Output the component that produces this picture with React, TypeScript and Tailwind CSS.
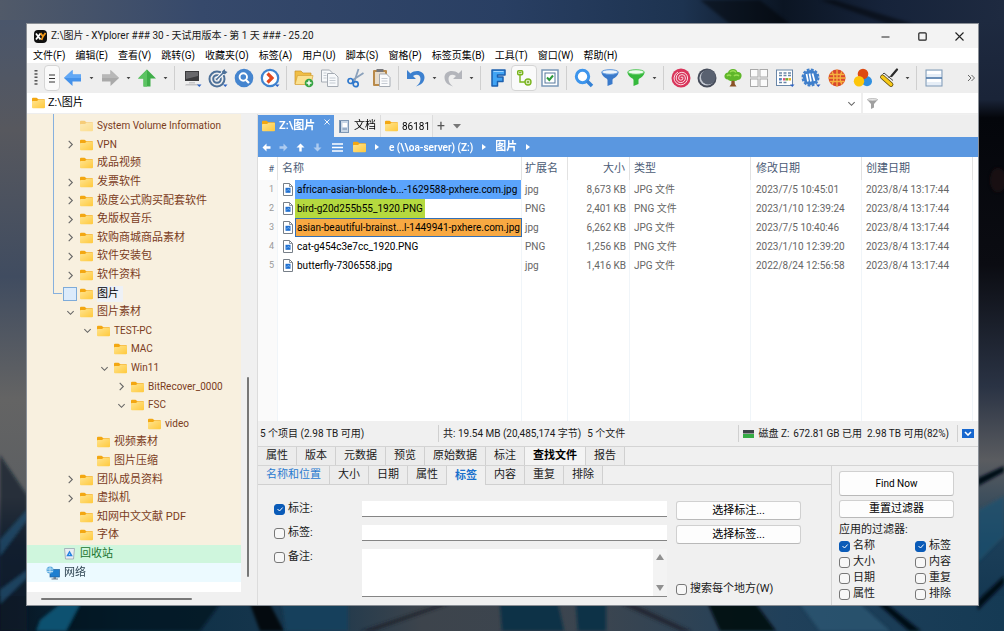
import React, { useState } from 'react';

/* ---------- shared drawings ---------- */

function Folder({ faded = false, className = 'h-3 w-[13px]' }: { faded?: boolean; className?: string }) {
  return (
    <svg viewBox="0 0 26 23" className={`${className} shrink-0 ${faded ? 'opacity-50' : ''}`} aria-hidden="true">
      <defs>
        <linearGradient id="folderFront" x1="0" y1="0" x2="1" y2="1">
          <stop offset="0" stopColor="#ffe490" />
          <stop offset="1" stopColor="#ffc93c" />
        </linearGradient>
      </defs>
      <path d="M0 3a2 2 0 0 1 2-2h7l4 3h11a2 2 0 0 1 2 2v13H0z" fill="#f3a712" />
      <path d="M0 9a1.500 1.500 0 0 1 1.500-1.500H10L13 5h11.500A1.500 1.500 0 0 1 26 6.500V20a2 2 0 0 1-2 2H2a2 2 0 0 1-2-2z" fill="url(#folderFront)" />
    </svg>
  );
}

function Chevron({ open }: { open: boolean }) {
  return (
    <svg viewBox="0 0 10 10" className="h-[9px] w-[9px]" fill="none" stroke="#666" strokeWidth="1.200" aria-hidden="true">
      <path d={open ? 'M1.500 3.500 5 7l3.500-3.500' : 'M3 1l4 4-4 4'} />
    </svg>
  );
}

function Backdrop() {
  return (
    <svg viewBox="0 0 1004 631" preserveAspectRatio="none" className="absolute inset-0 h-full w-full" aria-hidden="true">
      <defs>
        <linearGradient id="skyTop" x1="0" y1="0" x2="1" y2="0">
          <stop offset="0" stopColor="#515a69" />
          <stop offset="0.2" stopColor="#36496b" />
          <stop offset="0.5" stopColor="#293f63" />
          <stop offset="0.68" stopColor="#1d3350" />
          <stop offset="0.78" stopColor="#0b1523" />
          <stop offset="0.88" stopColor="#16233a" />
          <stop offset="1" stopColor="#1e2a40" />
        </linearGradient>
        <linearGradient id="skyLeft" x1="0" y1="0" x2="0" y2="1">
          <stop offset="0" stopColor="#4a566b" />
          <stop offset="0.18" stopColor="#57585e" />
          <stop offset="0.42" stopColor="#404c60" />
          <stop offset="0.62" stopColor="#646464" />
          <stop offset="0.78" stopColor="#5c5f62" />
          <stop offset="0.86" stopColor="#12263c" />
          <stop offset="1" stopColor="#071a2c" />
        </linearGradient>
        <linearGradient id="wallRight" x1="0" y1="0" x2="0" y2="1">
          <stop offset="0" stopColor="#1e2a40" />
          <stop offset="0.13" stopColor="#1a2438" />
          <stop offset="0.16" stopColor="#04060b" />
          <stop offset="0.4" stopColor="#0b0c12" />
          <stop offset="0.6" stopColor="#2a3344" />
          <stop offset="0.72" stopColor="#5a5c60" />
          <stop offset="0.86" stopColor="#1b3e58" />
          <stop offset="1" stopColor="#10344e" />
        </linearGradient>
        <linearGradient id="glassBottom" x1="0" y1="0" x2="1" y2="0">
          <stop offset="0" stopColor="#06131f" />
          <stop offset="0.12" stopColor="#0c2f45" />
          <stop offset="0.3" stopColor="#17364d" />
          <stop offset="0.42" stopColor="#3d444c" />
          <stop offset="0.6" stopColor="#3b4550" />
          <stop offset="0.78" stopColor="#20405a" />
          <stop offset="1" stopColor="#153a54" />
        </linearGradient>
        <filter id="focus"><feGaussianBlur stdDeviation="1.500" /></filter>
      </defs>
      <rect width="1004" height="40" fill="url(#skyTop)" />
      <rect y="20" width="60" height="611" fill="url(#skyLeft)" />
      <rect x="940" y="20" width="64" height="611" fill="url(#wallRight)" />
      <rect y="596" width="1004" height="35" fill="url(#glassBottom)" />
      <g filter="url(#focus)">
        <path d="M700 0h60l30 24h-60zM820 0h14l80 24h-26z" fill="#000" opacity="0.45" />
        <path d="M0 455 27 495V631H0z" fill="#0a1a2b" opacity="0.7" />
        <path d="M0 540l27-30v10L0 556zM0 590l27-20v8L0 604z" fill="#245273" opacity="0.7" />
        <path d="M70 604h150l-20 27H50z" fill="#04101a" opacity="0.7" />
        <path d="M40 620 60 604h20l-14 27H36z" fill="#0f5170" />
        <path d="M250 604h20l14 27h-24z" fill="#000" opacity="0.8" />
        <path d="M282 604h66v27h-62z" fill="#12405c" />
        <path d="M500 604h58l6 27h-62zM576 604h30v27h-28z" fill="#0d3047" />
        <path d="M708 604h48l20 27h-56z" fill="#02080e" opacity="0.9" />
        <path d="M360 631l80-27h10l-76 27zM620 604l60 27h12l-58-27z" fill="#1a2027" opacity="0.7" />
        <path d="M800 604h60l30 27h-70z" fill="#2b5672" opacity="0.8" />
        <path d="M878 604h9l34 27h-12zM978 478l26-12v6l-26 14zM978 600l26-24v8l-26 26z" fill="#050d16" />
        <path d="M978 510l26-14v40l-26 26z" fill="#1a5270" opacity="0.7" />
        <ellipse cx="998" cy="180" rx="8" ry="12" fill="#2c1c16" opacity="0.5" />
      </g>
    </svg>
  );
}

/* ---------- tool bar ---------- */

const Svg = ({ children }: { children: React.ReactNode }) => (
  <svg viewBox="0 0 20 20" className="h-5 w-5" fill="none" aria-hidden="true">
    {children}
  </svg>
);

const Dot = () => <path d="M15 16.500h4.500l-2.200 2.500z" fill="#2b62c4" />;

const icons = {
  back: <Svg><path d="M1 10 9.500 2v4.500L18 6.500v7l-8.500 0V18z" fill="#4592ea" /><path d="M1 10 9.500 2v4.500L18 6.500V10z" fill="#62a8f5" /></Svg>,
  forward: <Svg><path d="M19 10 10.500 2v4.500L2 6.500v7l8.500 0V18z" fill="#a9a9a9" /><path d="M19 10 10.500 2v4.500L2 6.500V10z" fill="#b8b8b8" /></Svg>,
  up: <Svg><path d="M10 1.500 19 10.500h-5.500V18.500h-7V10.500H1z" fill="#3fae49" /><path d="M10 1.500 1 10.500h5.500v8H10z" fill="#5cc463" /></Svg>,
  computer: (
    <Svg>
      <rect x="3" y="3" width="14" height="10" fill="#3b3b3d" />
      <path d="M4 4h12v4L4 11z" fill="#68686b" />
      <path d="M7 14h6v1.500H7zM4 16h12l1 1.500H3z" fill="#c4c4c6" />
      <Dot />
    </Svg>
  ),
  target: (
    <Svg>
      <g stroke="#4d7199" strokeWidth="2"><circle cx="9" cy="11" r="7.500" /><circle cx="9" cy="11" r="3.800" /></g>
      <circle cx="9" cy="11" r="1.300" fill="#4d7199" />
      <path d="M9 11 16 4" stroke="#fff" strokeWidth="3.500" /><path d="M9 11 16 4" stroke="#4d7199" strokeWidth="1.600" />
      <path d="M14 3.500 16.500 1l.8 2L19.500 4 17 6.200l-2.600-.4z" fill="#4d7199" />
      <Dot />
    </Svg>
  ),
  searchDisc: (
    <Svg>
      <circle cx="10" cy="10" r="9.300" fill="#4585cf" />
      <circle cx="9.300" cy="9" r="3.700" stroke="#fff" strokeWidth="1.900" /><path d="m12 12 3 3" stroke="#fff" strokeWidth="2.200" />
    </Svg>
  ),
  goDisc: (
    <Svg>
      <circle cx="10" cy="10" r="8.200" fill="#fff" stroke="#3f83cf" strokeWidth="2.200" />
      <path d="m7.500 5.500 4.500 4.500-4.500 4.500" stroke="#e2481e" strokeWidth="3.200" /><Dot />
    </Svg>
  ),
  newFolder: (
    <Svg>
      <path d="M1 3h6l2 2h8v11H1z" fill="#f0be45" stroke="#c99325" strokeWidth=".7" />
      <path d="M3.500 7.500H19l-2 9H1z" fill="#fbe191" stroke="#d5a23a" strokeWidth=".7" />
      <circle cx="15" cy="15" r="4.300" fill="#39a545" /><path d="M15 12.500v5M12.500 15h5" stroke="#fff" strokeWidth="1.500" />
    </Svg>
  ),
  copy: (
    <Svg>
      <path d="M1.500 2h8l2.500 2.500V14H1.500z" fill="#f7f9fb" stroke="#a5abb3" />
      <path d="M7.500 5.500h7l3.500 3.500v9.500H7.500z" fill="#f7f9fb" stroke="#a5abb3" />
      <path d="M9.500 10h6M9.500 12.500h6M9.500 15h6M3.500 5h3M3.500 7.500h3M3.500 10h3" stroke="#b9c0c9" strokeWidth=".8" />
    </Svg>
  ),
  cut: (
    <Svg>
      <path d="M12.500 1 8.500 13M17.500 5 6 12.500" stroke="#8ba1bb" strokeWidth="1.800" />
      <circle cx="4.500" cy="13" r="2.500" stroke="#2f78cc" strokeWidth="1.700" /><circle cx="9.700" cy="16.200" r="2.500" stroke="#2f78cc" strokeWidth="1.700" />
    </Svg>
  ),
  paste: (
    <Svg>
      <rect x="1" y="2" width="14" height="16" rx="1" fill="#b98a4a" /><rect x="3" y="4" width="10" height="12" fill="#e7dccb" />
      <rect x="4.500" y="1" width="7" height="3" fill="#77777a" />
      <path d="M7.500 6h7l3.500 3.500V18.500H7.500z" fill="#fafbfc" stroke="#a5abb3" />
      <path d="M9.500 10.500h6M9.500 13h6M9.500 15.500h6" stroke="#b9c0c9" strokeWidth=".8" />
    </Svg>
  ),
  undo: <Svg><path d="M1 2v9h9L7 8c4-2.500 7.500-1 7.500 3 0 3-1.500 5-4.500 7.500 5-1.500 8.500-4.500 8.500-9C18.500 3 10 1 4.500 5.500z" fill="#3c80cf" /></Svg>,
  redo: <Svg><path d="M19 2v9h-9l3-3C9 5.500 5.500 7 5.500 11c0 3 1.500 5 4.500 7.500-5-1.500-8.500-4.500-8.500-9C1.500 3 10 1 15.500 5.500z" fill="#b3b5bb" /></Svg>,
  font: (
    <Svg><path d="M4 2h13v5H9.500v2H15v4.500H9.500V18H4z" fill="#41a4f4" stroke="#1b5fae" strokeWidth="1.500" strokeLinejoin="round" /><path d="M5.500 3.500h10" stroke="#9bd2ff" /></Svg>
  ),
  tree: (
    <Svg>
      <g stroke="#7ab51d" strokeWidth="1.400"><rect x="3.700" y="2.700" width="5" height="4" rx="1" fill="#e8f6cf" /><path d="M6 7v7h5" /><circle cx="14" cy="14" r="3" fill="#e8f6cf" /></g>
      <path d="M5 4.700h2.500M12.700 14h2.600M14 12.700v2.600" stroke="#5d9210" strokeWidth=".9" />
    </Svg>
  ),
  check: (
    <Svg>
      <rect x="2" y="2" width="16" height="16" fill="#fff" stroke="#7a98b8" strokeWidth="1.500" /><rect x="5" y="5" width="10" height="10" stroke="#56789c" />
      <path d="m7 9.500 2.300 2.500L13 7.500" stroke="#2d9a3a" strokeWidth="2" />
    </Svg>
  ),
  search: <Svg><circle cx="8.500" cy="8.500" r="6.200" fill="#fdfeff" stroke="#3d95ec" strokeWidth="3" /><path d="m13 13 5 5" stroke="#3582d6" strokeWidth="3.600" /></Svg>,
  filterBlue: <Svg><path d="M1.500 4C1.500 9 7.500 10 7.500 12v6l5-2v-4c0-2 6-3 6-8z" fill="#3a7acb" /><ellipse cx="10" cy="4" rx="8.200" ry="2.300" fill="#eef5fc" stroke="#5a95db" /></Svg>,
  filterGreen: <Svg><path d="M1.500 4C1.500 9 7.500 10 7.500 12v6l5-2v-4c0-2 6-3 6-8z" fill="#35b93c" /><ellipse cx="10" cy="4" rx="8.200" ry="2.300" fill="#eefcef" stroke="#58c95e" /></Svg>,
  spiral: (
    <Svg>
      <circle cx="10" cy="10" r="9.500" fill="#d9355b" />
      <path d="M10 10a1 1 0 0 1 2 0 2.200 2.200 0 0 1-4.400 0 3.400 3.400 0 0 1 6.800 0 4.600 4.600 0 0 1-9.200 0 5.700 5.700 0 0 1 11.400 0 6.800 6.800 0 0 1-13.600 0 7.200 7.200 0 0 1 4-6" stroke="#fdeef1" strokeWidth=".9" />
    </Svg>
  ),
  moon: <Svg><circle cx="10" cy="10" r="9.500" fill="#454b59" /><circle cx="10" cy="10" r="7.600" fill="#c6cbd4" /><circle cx="11.300" cy="9" r="7.400" fill="#596170" /></Svg>,
  oak: (
    <Svg>
      <path d="M8.500 11h3l.3 5 1.700 2.500h-7L8.300 16z" fill="#8a5326" />
      <path d="M10 1c3 0 4 1.500 4.500 3C17.500 4 19 6 18.500 8.500c-.5 2.500-2 3.500-4 3.500-1 1.200-3 1.500-4.500.5-1.500 1-4 .5-5-1C2.500 11.500 1 9.500 1.500 7.500 2 5.500 3.500 4.500 5 4.500 5.500 2.500 7.500 1 10 1z" fill="#5fb62a" />
      <path d="M7 4c2-2 5-1.500 6 .5M4 8c1-1.500 3-1.500 4 0M11 8c1-1.500 4-1.500 5 0" stroke="#9ade55" strokeWidth="1.500" />
    </Svg>
  ),
  tiles: (
    <Svg><g fill="#fbfbfb" stroke="#a9a9a9"><rect x="1.500" y="1.500" width="7.500" height="7.500" /><rect x="11" y="1.500" width="7.500" height="7.500" /><rect x="1.500" y="11" width="7.500" height="7.500" /><rect x="11" y="11" width="7.500" height="7.500" /></g></Svg>
  ),
  calendar: (
    <Svg>
      <rect x="1.500" y="2" width="16" height="15.500" fill="#fff" stroke="#6a87a8" />
      <path d="M4 5h3M8.500 5h3M13 5h3M4 7.500h3M8.500 7.500h3M13 7.500h3" stroke="#6a87a8" strokeWidth="1.600" />
      <path d="M4 11h3M4 14.500h3M8.500 14.500h3" stroke="#6a87a8" strokeWidth="1.600" /><path d="M4 11.300h2.500" stroke="#4d82c7" strokeWidth="2.400" /><path d="M8 11.300h2.500" stroke="#e0507c" strokeWidth="2.400" /><path d="M10.500 11.300H13" stroke="#6aab2e" strokeWidth="2.400" /><path d="M13.500 11.300H16" stroke="#e8b022" strokeWidth="2.400" />
      <Dot />
    </Svg>
  ),
  badge: (
    <Svg>
      <circle cx="9.500" cy="9.500" r="7.600" fill="#3f7fcb" /><circle cx="9.500" cy="9.500" r="8" stroke="#3f7fcb" strokeWidth="2" strokeDasharray="2.800 1.400" />
      <path d="M5.500 6 7 13.500M8.500 5.500 10 13.500M11.500 5.500 13.500 13" stroke="#fff" strokeWidth="1.700" /><Dot />
    </Svg>
  ),
  ball: (
    <Svg>
      <circle cx="10" cy="10" r="8.500" fill="#d9482d" />
      <path d="M10 1.500v17M1.500 10h17M5 3.500c2.500 3.500 2.500 9.500 0 13M15 3.500c-2.500 3.500-2.500 9.500 0 13M2.500 6.500h15M2.500 13.500h15" stroke="#f6b23f" strokeWidth="1.300" />
    </Svg>
  ),
  circles: <Svg><circle cx="14" cy="13.200" r="5" fill="#2f8fe0" /><circle cx="10" cy="6" r="5.300" fill="#dd4b12" /><circle cx="6" cy="13.200" r="5.200" fill="#fdc60b" /></Svg>,
  roller: (
    <Svg>
      <path d="m12.500 8 5.500-6.500" stroke="#2b2b2b" strokeWidth="2.200" strokeLinecap="round" /><path d="M3.500 6.500 5 5l9 7.500M12.500 8l-3 1.500" stroke="#444" strokeWidth="1" />
      <path d="m3.500 9 8.500 7.500" stroke="#5d4a10" strokeWidth="4.800" strokeLinecap="round" /><path d="m3.500 9 8.500 7.500" stroke="#f7c918" strokeWidth="3.200" strokeLinecap="round" />
    </Svg>
  ),
  panes: (
    <Svg><rect x="2" y="2" width="16" height="16" fill="#e6eef7" stroke="#7e99b6" /><path d="M2 10h16" stroke="#4e78a8" strokeWidth="1.600" /><path d="M3 3h14v3H3zM3 11h14v3H3z" fill="#fff" /></Svg>
  ),
};

type IconName = keyof typeof icons;
const toolGroups: { name: IconName; label: string; caret?: boolean; boxed?: boolean }[][] = [
  [{ name: 'back', label: '后退', caret: true }, { name: 'forward', label: '前进', caret: true }, { name: 'up', label: '上一级', caret: true }],
  [{ name: 'computer', label: '此电脑' }, { name: 'target', label: '定位' }, { name: 'searchDisc', label: '查找' }, { name: 'goDisc', label: '转到' }],
  [{ name: 'newFolder', label: '新建文件夹' }, { name: 'copy', label: '复制' }, { name: 'cut', label: '剪切' }, { name: 'paste', label: '粘贴' }],
  [{ name: 'undo', label: '撤销', caret: true }, { name: 'redo', label: '重做', caret: true }],
  [{ name: 'font', label: '字体' }, { name: 'tree', label: '迷你树', boxed: true }, { name: 'check', label: '复选框' }],
  [{ name: 'search', label: '搜索' }, { name: 'filterBlue', label: '筛选' }, { name: 'filterGreen', label: '可视筛选', caret: true }],
  [
    { name: 'spiral', label: '螺旋' }, { name: 'moon', label: '深色模式' }, { name: 'oak', label: '树' }, { name: 'tiles', label: '平铺' },
    { name: 'calendar', label: '日历' }, { name: 'badge', label: '徽章' }, { name: 'ball', label: '球' }, { name: 'circles', label: '颜色' },
    { name: 'roller', label: '涂色', caret: true },
  ],
  [{ name: 'panes', label: '双窗格' }],
];

function Toolbar() {
  return (
    <div className="flex h-[30px] items-center overflow-hidden bg-[#eeeeee]">
      <svg viewBox="0 0 4 16" className="ml-[7px] h-4 w-1 shrink-0" aria-hidden="true">
        <path d="M2 0v16" stroke="#555" strokeWidth="3" strokeDasharray="1.500 1.800" />
      </svg>
      <button aria-label="菜单" className="ml-[6px] flex h-[26px] w-4 shrink-0 items-center justify-center rounded-sm border border-[#d5d5d5] bg-[#fafafa]">
        <svg viewBox="0 0 8 9" className="h-[9px] w-2" aria-hidden="true"><path d="M1 1h6M1 4.500h6M1 8h6" stroke="#333" /></svg>
      </button>
      {toolGroups.map((group, g) => (
        <div key={g} className="flex shrink-0 items-center">
          {g > 0 && <span className="mr-1 ml-[3px] h-6 w-px bg-[#cfcfcf]" />}
          {group.map((t) => (
            <React.Fragment key={t.name}>
              <button
                aria-label={t.label}
                className={`flex h-[26px] w-[26px] items-center justify-center rounded-sm border ${t.boxed ? 'border-[#d5d5d5] bg-[#fafafa]' : 'border-transparent'}`}
              >
                {icons[t.name]}
              </button>
              {t.caret && (
                <button aria-label={`${t.label}选项`} className="flex h-[26px] w-[11px] items-center justify-center">
                  <svg viewBox="0 0 6 4" className="h-[3px] w-[5px]" aria-hidden="true"><path d="M.5 0h5L3 3z" fill="#444" /></svg>
                </button>
              )}
            </React.Fragment>
          ))}
        </div>
      ))}
      <button aria-label="更多" className="mr-[3px] ml-auto">
        <svg viewBox="0 0 8 8" className="h-2 w-2" fill="none" stroke="#666" aria-hidden="true"><path d="m1 1 3 3-3 3M4.500 1l3 3-3 3" /></svg>
      </button>
    </div>
  );
}

/* ---------- folder tree ---------- */

type Node = {
  name: string;
  depth: number;
  toggle?: 'open' | 'closed' | 'box';
  guide?: boolean;
  faded?: boolean;
  kind?: 'bin' | 'network';
};

const nodes: Node[] = [
  { name: 'System Volume Information', depth: 0, guide: true, faded: true },
  { name: 'VPN', depth: 0, toggle: 'closed', guide: true },
  { name: '成品视频', depth: 0, guide: true },
  { name: '发票软件', depth: 0, toggle: 'closed', guide: true },
  { name: '极度公式购买配套软件', depth: 0, toggle: 'closed', guide: true },
  { name: '免版权音乐', depth: 0, toggle: 'closed', guide: true },
  { name: '软购商城商品素材', depth: 0, toggle: 'closed', guide: true },
  { name: '软件安装包', depth: 0, toggle: 'closed', guide: true },
  { name: '软件资料', depth: 0, toggle: 'closed', guide: true },
  { name: '图片', depth: 0, toggle: 'box' },
  { name: '图片素材', depth: 0, toggle: 'open' },
  { name: 'TEST-PC', depth: 1, toggle: 'open' },
  { name: 'MAC', depth: 2 },
  { name: 'Win11', depth: 2, toggle: 'open' },
  { name: 'BitRecover_0000', depth: 3, toggle: 'closed' },
  { name: 'FSC', depth: 3, toggle: 'open' },
  { name: 'video', depth: 4 },
  { name: '视频素材', depth: 1 },
  { name: '图片压缩', depth: 1 },
  { name: '团队成员资料', depth: 0, toggle: 'closed' },
  { name: '虚拟机', depth: 0, toggle: 'closed' },
  { name: '知网中文文献 PDF', depth: 0 },
  { name: '字体', depth: 0 },
  { name: '回收站', depth: -1, kind: 'bin' },
  { name: '网络', depth: -2, kind: 'network' },
];

const indent: Record<string, string> = {
  '-2': 'pl-px',
  '-1': 'pl-[18px]',
  '0': 'pl-[35px]',
  '1': 'pl-[52px]',
  '2': 'pl-[69px]',
  '3': 'pl-[86px]',
  '4': 'pl-[103px]',
};

const BinIcon = () => (
  <svg viewBox="0 0 13 13" className="h-[13px] w-[13px] shrink-0" aria-hidden="true">
    <path d="M1.500 1.500h10L10.500 12h-8z" fill="#e9edf2" stroke="#98a3b0" strokeWidth=".8" />
    <path d="M4.500 8.500 6.500 5l2 3.500z" fill="none" stroke="#2583e0" strokeWidth="1.500" />
  </svg>
);

const NetworkIcon = () => (
  <svg viewBox="0 0 14 14" className="h-[14px] w-[14px] shrink-0" aria-hidden="true">
    <rect x="4" y="3.500" width="9.500" height="7.500" fill="#1f7fd0" stroke="#1a5f9e" strokeWidth=".7" />
    <path d="M7.500 11h2.500v1.500h2V13.500H5.500v-1h2z" fill="#6e7f90" />
    <circle cx="4" cy="4" r="3.500" fill="#5aa9df" /><path d="M1 3h6M1 5.500h6M4 .5v7" stroke="#d8eefb" strokeWidth=".7" />
  </svg>
);

function TreeRow({ node }: { node: Node }) {
  const tone = node.kind === 'bin' ? 'bg-[#cff6dd] text-[#1c7430]' : node.kind === 'network' ? 'bg-[#ecfaff] text-[#2c4250]' : 'bg-[#f8f0df] text-[#7b3c1c]';
  const latin = /^[\x00-\x7f]+$/.test(node.name);
  const prefix = node.guide || node.toggle === 'box';
  return (
    <li className={`flex min-h-4 flex-1 items-center ${tone} ${prefix ? '' : indent[node.depth]}`}>
      {prefix && (
        <span className="ml-[26px] flex w-[9px] flex-col self-stretch">
          <span className={`flex-1 border-l border-[#86b0de] ${node.toggle === 'box' ? 'border-b' : ''}`} />
          <span className={`flex-1 ${node.guide ? 'border-l border-[#86b0de]' : ''}`} />
        </span>
      )}
      <span className="flex w-4 shrink-0 items-center justify-center">
        {node.toggle === 'box' && <button aria-label="展开" className="h-[14px] w-[14px] border border-[#7eabd9] bg-[#dcebfb]" />}
        {(node.toggle === 'open' || node.toggle === 'closed') && (
          <button aria-label={node.toggle === 'open' ? '折叠' : '展开'}>
            <Chevron open={node.toggle === 'open'} />
          </button>
        )}
      </span>
      <span className="ml-[2px] flex shrink-0 items-center gap-1">
        {node.kind === 'bin' ? <BinIcon /> : node.kind === 'network' ? <NetworkIcon /> : <Folder faded={node.faded} />}
        <span className={`whitespace-nowrap leading-4 ${latin ? 'text-[10px]' : 'text-[11px]'} ${node.toggle === 'box' ? 'bg-[#eef1f6] pr-1 text-black' : ''}`}>
          {node.name}
        </span>
      </span>
    </li>
  );
}

function TreePanel() {
  return (
    <aside className="flex w-[231px] shrink-0 flex-col border-r border-[#dcdcdc] bg-[#f0f0f0]">
      <div className="flex flex-1">
        <div className="flex w-[214px] flex-col bg-white">
          <div className="flex h-[3px] bg-[#f8f0df]"><span className="ml-[26px] border-l border-[#86b0de]" /></div>
          <ul className="flex flex-1 flex-col">
            {nodes.map((n) => <TreeRow key={n.name} node={n} />)}
          </ul>
          <div className="h-[10px]" />
        </div>
        <div className="flex flex-1 flex-col items-center pb-[15px]">
          <div className="flex-[262]" />
          <div className="mr-[2px] w-[2px] flex-[200] rounded bg-[#777]" />
        </div>
      </div>
      <div className="flex h-[13px] items-center pl-[14px]"><span className="h-[2px] w-[151px] rounded bg-[#777]" /></div>
    </aside>
  );
}

/* ---------- file list ---------- */

const files = [
  { name: 'african-asian-blonde-b...-1629588-pxhere.com.jpg', ext: 'jpg', size: '8,673 KB', type: 'JPG 文件', mod: '2023/7/5 10:45:01', mark: 'flex-1 bg-[#5ba4fc] border-[#5ba4fc]' },
  { name: 'bird-g20d255b55_1920.PNG', ext: 'PNG', size: '2,401 KB', type: 'PNG 文件', mod: '2023/1/10 12:39:24', mark: 'bg-[#b5d93f] border-[#b5d93f]' },
  { name: 'asian-beautiful-brainst...l-1449941-pxhere.com.jpg', ext: 'jpg', size: '6,262 KB', type: 'JPG 文件', mod: '2023/7/5 10:40:46', mark: 'flex-1 bg-[#f8a942] border-[#336fb5]' },
  { name: 'cat-g454c3e7cc_1920.PNG', ext: 'PNG', size: '1,256 KB', type: 'PNG 文件', mod: '2023/1/10 12:39:20', mark: 'border-transparent' },
  { name: 'butterfly-7306558.jpg', ext: 'jpg', size: '1,416 KB', type: 'JPG 文件', mod: '2022/8/24 12:56:58', mark: 'border-transparent' },
];

const FileIcon = () => (
  <svg viewBox="0 0 10 13" className="h-[13px] w-[10px] shrink-0" aria-hidden="true">
    <path d="M.5.5h6l3 3v9h-9z" fill="#fff" stroke="#777f88" /><path d="M6.500.5v3h3" fill="none" stroke="#777f88" strokeWidth=".8" />
    <rect x="2.500" y="4.800" width="5" height="5" fill="#1f6fd0" /><path d="m3 8.500 2-2 2 1" stroke="#8cc0f5" fill="none" strokeWidth=".8" />
  </svg>
);

const line = 'border-r border-[#f0f5f9]';

function FileTable() {
  return (
    <table className="h-full w-full table-fixed border-separate border-spacing-0 bg-white text-[10px] text-[#666]">
      <colgroup>
        <col className="w-[20px]" /><col className="w-[244px]" /><col className="w-[46px]" /><col className="w-[62px]" />
        <col className="w-[121px]" /><col className="w-[111px]" /><col className="w-[111px]" /><col />
      </colgroup>
      <thead>
        <tr className="h-[23px] text-left text-[11px] leading-4 text-[#4b5b75] [&>th]:border-r [&>th]:border-[#e2e2e2] [&>th]:font-normal">
          <th className="pr-[3px] text-right text-[9px]">#</th>
          <th className="pl-1">名称</th>
          <th className="pl-[3px]">扩展名</th>
          <th className="pr-1 text-right">大小</th>
          <th className="pl-1">类型</th>
          <th className="pl-[5px]">修改日期</th>
          <th className="pl-1">创建日期</th>
          <th className="!border-r-0" aria-label="空" />
        </tr>
      </thead>
      <tbody>
        {files.map((f, i) => (
          <tr key={f.name} className="h-[19px] whitespace-nowrap">
            <td className={`${line} bg-[#fafafa] pr-[3px] text-right text-[9px] text-[#999]`}>{i + 1}</td>
            <td className={`${line} pl-[5px]`}>
              <div className="flex items-center gap-[2px]">
                <FileIcon />
                <span className={`flex h-[19px] items-center border px-px text-black ${f.mark}`}>{f.name}</span>
              </div>
            </td>
            <td className={`${line} pl-[3px]`}>{f.ext}</td>
            <td className={`${line} pr-[3px] text-right`}>{f.size}</td>
            <td className={`${line} pl-1`}>{f.type}</td>
            <td className={`${line} pl-[5px]`}>{f.mod}</td>
            <td className={`${line} pl-1`}>2023/8/4 13:17:44</td>
            <td />
          </tr>
        ))}
        <tr>
          <td className={`${line} bg-[#fafafa]`} />
          {[0, 1, 2, 3, 4, 5].map((k) => <td key={k} className={line} />)}
          <td />
        </tr>
      </tbody>
    </table>
  );
}

const Arrow = ({ turn, dim = false }: { turn: string; dim?: boolean }) => (
  <svg viewBox="0 0 9 9" className={`h-[9px] w-[9px] ${turn} ${dim ? 'opacity-50' : ''}`} aria-hidden="true">
    <path d="M.5 4.500 4.500.5v2.800h4v2.400h-4v2.800z" fill="#fff" />
  </svg>
);

const Tri = () => <svg viewBox="0 0 4 6" className="h-[6px] w-1" aria-hidden="true"><path d="M0 0l4 3-4 3z" fill="#fff" /></svg>;

function PaneHeader() {
  return (
    <>
      <div className="flex h-[22px] items-stretch bg-[#eeeeee] text-[11px]">
        <div className="flex w-[76px] items-center bg-[#5a97e0] pl-1 text-white">
          <Folder />
          <span className="ml-1 text-[11px] leading-4 font-semibold">Z:\图片</span>
          <button aria-label="关闭标签页" className="mr-1 ml-auto self-start pt-1">
            <svg viewBox="0 0 6 6" className="h-[6px] w-[6px]" stroke="#fff" strokeWidth=".9" aria-hidden="true"><path d="m.5.5 5 5M5.500.5l-5 5" /></svg>
          </button>
        </div>
        <button className="flex w-[47px] items-center gap-[5px] border-r border-[#dcdcdc] bg-[#f2f2f2] pl-[5px] leading-4">
          <svg viewBox="0 0 10 13" className="h-[13px] w-[10px] shrink-0" aria-hidden="true">
            <rect x=".5" y=".5" width="9" height="12" fill="#c8d6e6" stroke="#7f98b5" /><path d="M1.500 1v11" stroke="#5b7ba0" />
            <rect x="3.500" y="3" width="4.500" height="4" fill="#fff" /><path d="M3.500 9h4.500" stroke="#6b87a8" />
          </svg>
          文档
        </button>
        <button className="flex w-[52px] items-center gap-1 border-r border-[#dcdcdc] bg-[#f2f2f2] pl-1 text-[10px]"><Folder /><span>86181</span></button>
        <button aria-label="新标签页" className="ml-1 text-sm leading-none text-[#555]">+</button>
        <button aria-label="标签页列表" className="ml-2">
          <svg viewBox="0 0 8 5" className="h-[5px] w-2" aria-hidden="true"><path d="M0 0h8L4 4.500z" fill="#777" /></svg>
        </button>
      </div>
      <div className="flex h-5 items-center bg-[#5a97e0] pl-1 text-[10px] font-semibold text-white">
        <div className="flex gap-2">
          <button aria-label="后退"><Arrow turn="" /></button>
          <button aria-label="前进"><Arrow turn="rotate-180" dim /></button>
          <button aria-label="向上"><Arrow turn="rotate-90" /></button>
          <button aria-label="向下"><Arrow turn="-rotate-90" dim /></button>
        </div>
        <button aria-label="菜单" className="ml-[10px]">
          <svg viewBox="0 0 11 9" className="h-[9px] w-[11px]" aria-hidden="true"><path d="M0 1h11M0 4.500h11M0 8h11" stroke="#fff" strokeWidth="1.300" /></svg>
        </button>
        <span className="ml-[10px]"><Folder /></span>
        <span className="ml-[9px]"><Tri /></span>
        <span className="ml-[10px]">e (\\oa-server) (Z:)</span>
        <span className="ml-[9px]"><Tri /></span>
        <span className="ml-[9px] text-[11px] leading-4">图片</span>
        <span className="ml-[9px]"><Tri /></span>
      </div>
    </>
  );
}

function StatusBar() {
  return (
    <div className="flex h-[25px] items-center bg-[#f0f0f0] text-[10px] text-[#1a1a1a]">
      <span className="w-[180px] shrink-0 pl-[2px]">5 个项目 (2.98 TB 可用)</span>
      <span className="flex h-[17px] flex-1 items-center gap-[6px] border-l border-[#d0d0d0] pl-1">
        <span>共: 19.54 MB (20,485,174 字节)</span><span>5 个文件</span>
      </span>
      <span className="flex h-[17px] items-center border-l border-[#d0d0d0] pr-2 pl-1">
        <svg viewBox="0 0 11 8" className="mr-1 h-2 w-[11px]" aria-hidden="true"><path d="M0 0h11v3.500H0z" fill="#3d4348" /><path d="M0 4h11v4H0z" fill="#35ad45" /></svg>
        <span>磁盘 Z:</span><span className="ml-1">672.81 GB 已用</span><span className="ml-[5px]">2.98 TB 可用(82%)</span>
      </span>
      <span className="flex h-[17px] w-[21px] items-center border-l border-[#d0d0d0] pl-1">
        <button aria-label="切换信息面板" className="flex h-[9px] w-[12px] items-center justify-center bg-[#1868cf]">
          <svg viewBox="0 0 8 5" className="h-[5px] w-2" fill="none" stroke="#fff" strokeWidth="1.600" aria-hidden="true"><path d="m1 1 3 3 3-3" /></svg>
        </button>
      </span>
    </div>
  );
}

/* ---------- find panel ---------- */

function Check({ label, on = false, className = '' }: { label: string; on?: boolean; className?: string }) {
  const [checked, setChecked] = useState(on);
  return (
    <label className={`flex h-4 items-center gap-[3px] text-[11px] leading-4 whitespace-nowrap ${className}`}>
      <span className="grid h-[11px] w-[11px] place-items-center">
        <input
          type="checkbox"
          checked={checked}
          onChange={(e) => setChecked(e.target.checked)}
          className="col-start-1 row-start-1 h-[11px] w-[11px] appearance-none rounded-[3px] border border-[#777] bg-[#f7f7f7] checked:border-[#0a5bb8] checked:bg-[#0a5bb8]"
        />
        {checked && (
          <svg viewBox="0 0 8 8" className="pointer-events-none col-start-1 row-start-1 h-2 w-2" fill="none" stroke="#fff" aria-hidden="true"><path d="m1.500 4 2 2 3.200-3.500" /></svg>
        )}
      </span>
      {label}
    </label>
  );
}

const upperTabs = ['属性', '版本', '元数据', '预览', '原始数据', '标注', '查找文件', '报告'];
const lowerTabs = ['名称和位置', '大小', '日期', '属性', '标签', '内容', '重复', '排除'];

function PushButton({ children, className }: { children: React.ReactNode; className: string }) {
  return (
    <button className={`flex items-center justify-center rounded-[3px] border border-[#d0d0d0] border-b-[#b9b9b9] bg-[#fdfdfd] text-black ${className}`}>
      {children}
    </button>
  );
}

function FindPanel() {
  return (
    <section className="flex flex-col border-t border-[#d4d4d4] bg-[#f0f0f0] text-[11px] leading-4 text-[#1a1a1a]">
      <div className="flex h-[19px] border-b border-[#d4d4d4]">
        {upperTabs.map((t) => (
          <button key={t} className={`border-r border-[#d0d0d0] px-2 ${t === '查找文件' ? 'bg-[#f4f4f4] font-bold text-black' : 'bg-[#ececec]'}`}>{t}</button>
        ))}
      </div>
      <div className="flex">
        <div className="flex min-w-0 flex-1 flex-col">
          <div className="flex h-[19px]">
            {lowerTabs.map((t) => (
              <button
                key={t}
                className={`border-r border-[#d0d0d0] px-2 ${t === '标签' ? 'bg-[#f0f0f0] font-bold text-[#1a70cc]' : 'border-b bg-[#ececec]'} ${t === '名称和位置' ? 'text-[#2a7ad0]' : ''}`}
              >
                {t}
              </button>
            ))}
            <span className="flex-1 border-b border-[#d0d0d0]" />
          </div>
          <div className="flex flex-1 gap-[9px] pt-4 pr-[30px] pb-2 pl-4">
            <div className="flex w-[79px] shrink-0 flex-col gap-2">
              <Check label="标注:" on />
              <Check label="标签:" />
              <Check label="备注:" />
            </div>
            <div className="flex min-w-0 flex-1 flex-col gap-2">
              <input aria-label="标注" className="h-4 w-full shrink-0 border-b border-[#858585] bg-white px-1 outline-none" />
              <input aria-label="标签" className="h-4 w-full shrink-0 border-b border-[#858585] bg-white px-1 outline-none" />
              <div className="flex h-12 border-b border-[#858585] bg-white">
                <textarea aria-label="备注" className="min-w-0 flex-1 resize-none px-1 outline-none" />
                <div className="flex w-[14px] flex-col items-center justify-between bg-[#f3f3f3] py-[5px]">
                  <svg viewBox="0 0 8 6" className="h-[6px] w-2" aria-hidden="true"><path d="M4 0l4 6H0z" fill="#909090" /></svg>
                  <svg viewBox="0 0 8 6" className="h-[6px] w-2" aria-hidden="true"><path d="M4 6l4-6H0z" fill="#909090" /></svg>
                </div>
              </div>
            </div>
            <div className="flex w-[125px] shrink-0 flex-col gap-[5px]">
              <PushButton className="h-[19px]">选择标注...</PushButton>
              <PushButton className="h-[19px]">选择标签...</PushButton>
              <Check label="搜索每个地方(W)" className="mt-auto" />
            </div>
          </div>
        </div>
        <div className="flex w-[147px] shrink-0 flex-col border-l border-[#d4d4d4] pt-[5px] pr-6 pl-[7px]">
          <PushButton className="h-[25px] text-[10px]">Find Now</PushButton>
          <PushButton className="mt-1 h-[18px]">重置过滤器</PushButton>
          <span className="mt-1 -mr-4">应用的过滤器:</span>
          <div className="-mr-5 grid grid-cols-[76px_1fr]">
            <Check label="名称" on /><Check label="标签" on />
            <Check label="大小" /><Check label="内容" />
            <Check label="日期" /><Check label="重复" />
            <Check label="属性" /><Check label="排除" />
          </div>
        </div>
      </div>
    </section>
  );
}

/* ---------- window ---------- */

const menus = ['文件(F)', '编辑(E)', '查看(V)', '跳转(G)', '收藏夹(O)', '标签(A)', '用户(U)', '脚本(S)', '窗格(P)', '标签页集(B)', '工具(T)', '窗口(W)', '帮助(H)'];

export default function App() {
  return (
    <div className="relative flex min-h-screen bg-[#14202f] pt-6 pr-[26px] pb-[26px] pl-[27px] font-['Roboto','Noto_Sans_CJK_SC',sans-serif]">
      <Backdrop />
      <main className="relative flex min-w-0 flex-1 flex-col bg-[#f0f0f0] shadow-[0_0_0_1px_#8a8f96]">
        <header className="flex h-6 items-center bg-[#f3f3f3] pl-[7px]">
          <svg viewBox="0 0 13 13" className="h-[13px] w-[13px] shrink-0" aria-hidden="true">
            <rect width="13" height="13" rx="4" fill="#111" />
            <path d="m2 3.500 4.500 6M6.500 3.500 2 9.500" stroke="#fff" strokeWidth="1.800" /><path d="m6.500 3 2.500 3.500L11.500 3M9 6.500 7.500 10" stroke="#f49b1b" strokeWidth="1.800" fill="none" />
          </svg>
          <h1 className="ml-1 text-[10px] leading-4 text-[#1a1a1a]">Z:\图片 - XYplorer ### 30 - 天试用版本 - 第 1 天 ### - 25.20</h1>
          <div className="ml-auto flex items-center gap-7 pr-[14px]">
            <button aria-label="最小化"><svg viewBox="0 0 9 9" className="h-[9px] w-[9px]" stroke="#222" aria-hidden="true"><path d="M.5 5h8" /></svg></button>
            <button aria-label="最大化"><svg viewBox="0 0 9 9" className="h-[9px] w-[9px]" fill="none" stroke="#222" strokeWidth="1.200" aria-hidden="true"><rect x=".8" y=".8" width="7.400" height="7.400" rx="1" /></svg></button>
            <button aria-label="关闭"><svg viewBox="0 0 9 9" className="h-[9px] w-[9px]" stroke="#222" strokeWidth="1.100" aria-hidden="true"><path d="m.5.5 8 8M8.500.5l-8 8" /></svg></button>
          </div>
        </header>
        <nav className="flex h-[15px] items-center gap-[10px] bg-white pl-[6px] text-[10px] leading-[15px] whitespace-nowrap text-black">
          {menus.map((m) => <button key={m}>{m}</button>)}
        </nav>
        <Toolbar />
        <div className="flex h-[21px] bg-[#eeeeee] pb-px">
          <div className="flex flex-1 items-center bg-white pr-[5px] pl-[5px]">
            <Folder />
            <input aria-label="地址" defaultValue="Z:\图片" className="ml-[3px] h-4 min-w-0 flex-1 text-[11px] leading-4 text-black outline-none" />
            <button aria-label="历史"><Chevron open /></button>
          </div>
          <div className="ml-[2px] flex w-[115px] items-center bg-white pl-1">
            <svg viewBox="0 0 11 11" className="h-[11px] w-[11px]" aria-hidden="true"><path d="M0 1.500h11L7 6v3.500L4 11V6z" fill="#a0a0a0" /><ellipse cx="5.500" cy="1.700" rx="5" ry="1.200" fill="#e6e6e6" stroke="#a0a0a0" strokeWidth=".6" /></svg>
          </div>
        </div>
        <div className="flex min-h-0 flex-1">
          <TreePanel />
          <div className="flex min-w-0 flex-1 flex-col pt-px">
            <PaneHeader />
            <div className="grid flex-1"><FileTable /></div>
            <StatusBar />
            <FindPanel />
          </div>
        </div>
      </main>
    </div>
  );
}
